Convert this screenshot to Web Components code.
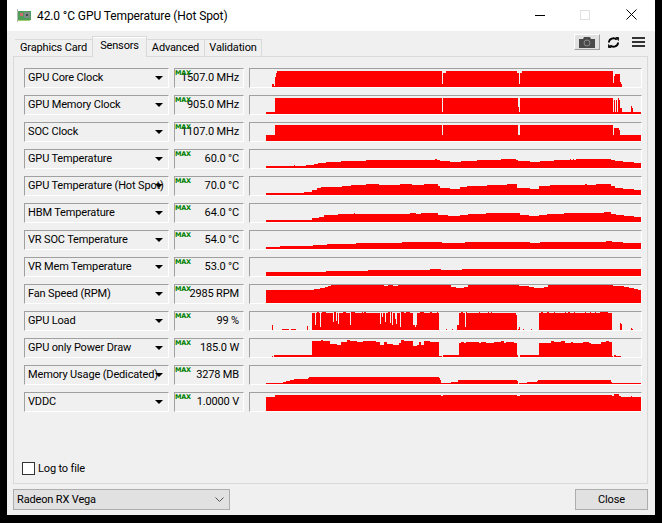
<!DOCTYPE html>
<html>
<head>
<meta charset="utf-8">
<title>GPU-Z</title>
<style>
  html, body { margin: 0; height: 100%; background: #000; overflow: hidden; }
  body { font: 11px Roboto, "Liberation Sans", sans-serif; letter-spacing: -.15px; color: #000; }
</style>
</head>
<body>
<gz-window>
  <gz-titlebar slot="title">42.0 °C GPU Temperature (Hot Spot)</gz-titlebar>
  <gz-tabs slot="tabs"></gz-tabs>

  <sensor-row label="GPU Core Clock" value="1507.0 MHz" data="272:3 274:1 275:10 276:14 277:16 442:3 443:14 446:16 517:14 519:3 520:14 522:16 613:4 614:11 615:13 620:5 621:3 622:0"></sensor-row>
  <sensor-row label="GPU Memory Clock" value="905.0 MHz" data="266:2 275:16 442:2 443:16 518:7 519:2 520:16 613:2 614:14 615:2 616:14 617:2 618:16 619:14 620:6 622:2 631:8 632:6 633:2"></sensor-row>
  <sensor-row label="SOC Clock" value="1107.0 MHz" data="266:6 275:16 442:6 443:16 518:6 520:16 613:6 614:13 619:11 620:6"></sensor-row>
  <sensor-row label="GPU Temperature" value="60.0 °C" data="266:2 294:3 295:2 306:3 314:4 318:5 326:6 341:7 366:8 435:9 437:8 440:7 450:6 461:7 477:8 501:9 516:8 518:7 530:6 540:7 554:8 570:9 571:8 573:9 574:8 576:9 611:8 615:7 623:6 634:5"></sensor-row>
  <sensor-row label="GPU Temperature (Hot Spot)" value="70.0 °C" data="266:2 304:3 312:5 317:7 321:8 342:9 351:10 366:11 379:10 386:10 400:11 412:10 424:11 438:9 440:7 450:6 460:8 467:9 487:10 507:11 517:7 530:6 539:9 550:10 585:11 587:10 596:11 611:9 615:7 623:6 634:5"></sensor-row>
  <sensor-row label="HBM Temperature" value="64.0 °C" data="266:2 312:4 319:5 324:7 338:8 354:9 355:8 410:9 416:8 421:9 438:7 448:6 460:7 468:8 486:9 520:7 529:6 539:7 547:8 564:9 604:10 611:8 616:7 624:6 634:5"></sensor-row>
  <sensor-row label="VR SOC Temperature" value="54.0 °C" data="266:2 280:3 313:4 327:5 356:6 402:7 442:6 465:7 530:6 540:7 606:8 612:7 623:6"></sensor-row>
  <sensor-row label="VR Mem Temperature" value="53.0 °C" data="266:4 326:5 368:6 430:7 441:6 462:7"></sensor-row>
  <sensor-row label="Fan Speed (RPM)" value="2985 RPM" data="266:13 314:14 320:15 325:16 328:17 331:18 384:17 388:18 393:17 398:18 438:18 451:16 456:15 464:16 468:18 519:17 529:16 534:15 540:15 544:16 548:18 613:17 624:16 629:15 634:14 638:13"></sensor-row>
  <sensor-row label="GPU Load" value="99 %" data="272:5 273:0 282:1 289:0 291:1 296:0 307:4 308:0 312:17 315:5 316:17 317:18 319:17 320:3 321:17 322:18 326:17 333:8 334:18 336:9 337:17 338:6 339:17 343:18 346:17 350:5 351:18 355:17 362:18 363:17 364:18 366:17 380:6 381:17 382:13 383:17 385:8 386:17 388:18 390:7 391:18 392:5 393:17 395:11 396:6 397:17 400:3 401:18 404:17 406:18 410:17 413:5 415:3 416:5 417:17 420:18 424:17 430:18 432:17 437:18 438:17 439:0 446:1 447:0 452:1 453:0 457:5 459:17 461:18 463:17 465:3 466:18 467:17 479:18 480:17 488:18 489:17 491:18 492:17 516:15 517:0 518:1 519:3 520:0 523:1 524:0 531:1 532:0 539:17 541:18 543:17 547:18 549:17 554:18 555:17 565:18 566:17 568:18 570:17 574:18 575:17 585:18 586:17 590:18 591:17 595:18 596:17 600:18 601:18 608:17 612:0 620:7 621:6 622:0 631:2 632:1 633:0"></sensor-row>
  <sensor-row label="GPU only Power Draw" value="185.0 W" data="272:1 273:0 274:2 312:16 321:17 323:16 330:13 337:12 341:15 347:17 350:16 357:15 363:16 376:15 380:12 384:15 387:13 393:12 399:14 401:17 404:16 413:11 417:12 419:15 421:12 424:16 430:15 439:1 442:0 443:2 459:14 461:15 464:14 466:15 479:14 481:15 486:14 494:15 501:16 504:14 506:15 514:14 517:2 518:0 520:2 539:14 551:16 554:15 561:16 565:14 571:15 573:14 583:15 589:14 591:13 601:15 606:16 609:15 612:1 613:0 614:2 616:1 621:0"></sensor-row>
  <sensor-row label="Memory Usage (Dedicated)" value="3278 MB" data="266:1 283:2 286:3 290:4 294:5 308:6 309:7 439:6 440:4 441:1 451:2 458:4 517:3 518:0 519:1 527:2 537:3 538:4 611:2 612:1"></sensor-row>
  <sensor-row label="VDDC" value="1.0000 V" data="266:14 275:16 441:15 443:16 517:15 520:16 612:15 614:17 619:15 621:14 631:15 632:14"></sensor-row>

  <gz-check slot="log">Log to file</gz-check>
  <gz-select slot="footer-left">Radeon RX Vega</gz-select>
  <gz-button slot="footer-right">Close</gz-button>
</gz-window>

<script>
function register(name, clz) {
  !customElements.get(name) && customElements.define(name, clz);
}

class Base extends HTMLElement {
  static styles = "";
  constructor() {
    super();
    this.attachShadow({ mode: "open" });
  }
  connectedCallback() {
    this.shadowRoot.innerHTML = `<style>${this.constructor.styles}</style>${this.render()}`;
  }
  render() {
    return "<slot></slot>";
  }
}

class GzWindow extends Base {
  static styles = `
    :host { display: flex; flex-direction: column; width: 648px; height: 515px; margin-left: 7px; background: #f0f0f0; }
    .panel { display: flex; flex-direction: column; gap: 7px; box-sizing: border-box; height: 428px; margin-left: 6px; width: 635px;
      padding: 11px 5px 0 10px; border: 1px solid #d9d9d9; }
    .log { margin-top: auto; height: 21px; }
    .foot { display: flex; justify-content: space-between; margin: 5px 7px 0 6px; }
  `;
  render() {
    return `<slot name="title"></slot><slot name="tabs"></slot>
      <div class="panel"><slot></slot><div class="log"><slot name="log"></slot></div></div>
      <div class="foot"><slot name="footer-left"></slot><slot name="footer-right"></slot></div>`;
  }
}

class GzTitlebar extends Base {
  static styles = `
    :host { display: flex; align-items: center; height: 31px; background: #fff; font-size: 12px; letter-spacing: -.1px; position: relative; }
    .ic { margin: 0 6px 0 10px; }
    .ctl { position: absolute; top: 0; left: 0; }
  `;
  render() {
    return `<svg class="ic" width="14" height="13" viewBox="0 0 14 13" shape-rendering="crispEdges">
        <rect x="0" y="0" width="1" height="13" fill="#b9b9b9"/>
        <rect x="1" y="2" width="13" height="9" fill="#4f9f5a"/>
        <rect x="1" y="11" width="12" height="1" fill="#9fce6f"/>
        <rect x="3" y="4" width="3" height="3" fill="#d06b6b"/>
        <rect x="7" y="3" width="6" height="6" fill="#7c8c86"/>
        <rect x="9" y="5" width="2" height="2" fill="#3c4c46"/>
      </svg><span><slot></slot></span>
      <svg class="ctl" width="648" height="31" viewBox="0 0 648 31" shape-rendering="crispEdges" fill="none">
        <rect x="528" y="15" width="10" height="1" fill="#000"/>
        <rect x="573.5" y="10.5" width="9" height="9" stroke="#e0e0e0"/>
        <path d="M619.5 9.5l10 10M629.5 9.5l-10 10" stroke="#000" shape-rendering="auto"/>
      </svg>`;
  }
}

class GzTabs extends Base {
  static styles = `
    :host { display: flex; align-items: flex-end; height: 26px; padding-left: 8px; position: relative; margin-bottom: -1px; z-index: 1; }
    .t { box-sizing: border-box; height: 18px; line-height: 16px; text-align: center; white-space: nowrap; border: 1px solid #d9d9d9; border-left: 0; background: #f0f0f0; }
    .t:first-child { border-left: 1px solid #d9d9d9; }
    .on { height: 21px; line-height: 17px; margin-left: -1px; border-left: 1px solid #d9d9d9; border-bottom: 0; box-shadow: inset 0 1px 0 #fff; }
    .tools { position: absolute; right: 10px; top: 3px; display: flex; align-items: center; }
    .cam { box-sizing: border-box; width: 26px; height: 16px; display: flex; align-items: center; justify-content: center; background: #e1e1e1;
      border: 1px solid; border-color: #fff #a0a0a0 #a0a0a0 #fff; }
    .gap1 { margin-left: 7px; } .gap2 { margin-left: 12px; }
  `;
  render() {
    return `<div class="t" style="width:78px">Graphics Card</div><div class="t on" style="width:55px">Sensors</div>
      <div class="t" style="width:58px">Advanced</div><div class="t" style="width:57px">Validation</div>
      <div class="tools">
        <div class="cam"><svg width="16" height="11" viewBox="0 0 16 11"><path d="M0 2h4l1-2h6l1 2h4v9H0z" fill="#4a4a4a"/><circle cx="8" cy="6" r="3" fill="none" stroke="#8c8c8c"/></svg></div>
        <svg class="gap1" width="13" height="11" viewBox="0 0 14 12" fill="none" stroke="#000" stroke-width="2"><path d="M2 6a5 4.6 0 0 1 8.6-3.2M12 6a5 4.6 0 0 1-8.6 3.2"/><path d="M9 0l4 .4-.3 4.2zM5 12l-4-.4.3-4.2z" fill="#000" stroke="none"/></svg>
        <svg class="gap2" width="13" height="10" viewBox="0 0 13 10" shape-rendering="crispEdges" fill="#333"><rect width="13" height="2"/><rect y="4" width="13" height="2"/><rect y="8" width="13" height="2"/></svg>
      </div>`;
  }
}

// data is a list of "screenX:height" steps, each one runs until the next
class SensorGraph extends Base {
  static styles = `
    :host { display: block; box-sizing: border-box; width: 393px; height: 20px; background: #f0f0f0;
      border: 1px solid; border-color: #a0a0a0 #fff #fff #a0a0a0; }
    svg { display: block; }
  `;
  render() {
    const steps = (this.getAttribute("data") || "").split(" ").map((s) => s.split(":").map(Number));
    let d = "";
    steps.forEach(([x, h], i) => {
      const next = i + 1 < steps.length ? steps[i + 1][0] : 641;
      if (h > 0) d += `M${x - 250} 18h${next - x}v${-h}h${x - next}z`;
    });
    return `<svg width="391" height="18" viewBox="0 0 391 18" shape-rendering="crispEdges"><path d="${d}" fill="#f00"/></svg>`;
  }
}

class SensorRow extends Base {
  static styles = `
    :host { display: flex; gap: 5px; height: 20px; }
    .box { box-sizing: border-box; height: 20px; line-height: 18px; white-space: nowrap; overflow: hidden; position: relative;
      border: 1px solid; border-color: #a0a0a0 #fff #fff #a0a0a0; }
    .name { width: 145px; padding-left: 3px; }
    .name span { display: block; width: 137px; overflow: hidden; }
    .name svg { position: absolute; left: 130px; top: 7px; }
    .val { width: 70px; text-align: right; padding-right: 4px; }
    .max { position: absolute; left: 0; top: 1px; font: bold 6.5px/7px "DejaVu Sans", sans-serif; letter-spacing: -.2px; color: #008000; }
  `;
  render() {
    return `<div class="box name"><span>${this.getAttribute("label")}</span>
        <svg width="8" height="4" viewBox="0 0 8 4"><path d="M0 0h8L4 4z"/></svg></div>
      <div class="box val"><span class="max">MAX</span>${this.getAttribute("value")}</div>
      <sensor-graph data="${this.getAttribute("data")}"></sensor-graph>`;
  }
}

class GzCheck extends Base {
  static styles = `
    :host { display: flex; align-items: center; gap: 3px; margin-left: -2px; }
    i { box-sizing: border-box; width: 13px; height: 13px; background: #fff; border: 1px solid #333; }
  `;
  render() {
    return `<i></i><span><slot></slot></span>`;
  }
}

class GzSelect extends Base {
  static styles = `
    :host { display: flex; align-items: center; justify-content: space-between; box-sizing: border-box; width: 217px; height: 21px;
      padding: 0 5px 0 3px; background: #e1e1e1; border: 1px solid #adadad; }
  `;
  render() {
    return `<span><slot></slot></span><svg width="9" height="5" viewBox="0 0 9 5" fill="none" stroke="#555"><path d="M.5 .5l4 4 4-4"/></svg>`;
  }
}

class GzButton extends Base {
  static styles = `
    :host { display: block; box-sizing: border-box; width: 73px; height: 21px; line-height: 19px; text-align: center; background: #e1e1e1; border: 1px solid #adadad; }
  `;
}

register("gz-window", GzWindow);
register("gz-titlebar", GzTitlebar);
register("gz-tabs", GzTabs);
register("sensor-graph", SensorGraph);
register("sensor-row", SensorRow);
register("gz-check", GzCheck);
register("gz-select", GzSelect);
register("gz-button", GzButton);
</script>
</body>
</html>
